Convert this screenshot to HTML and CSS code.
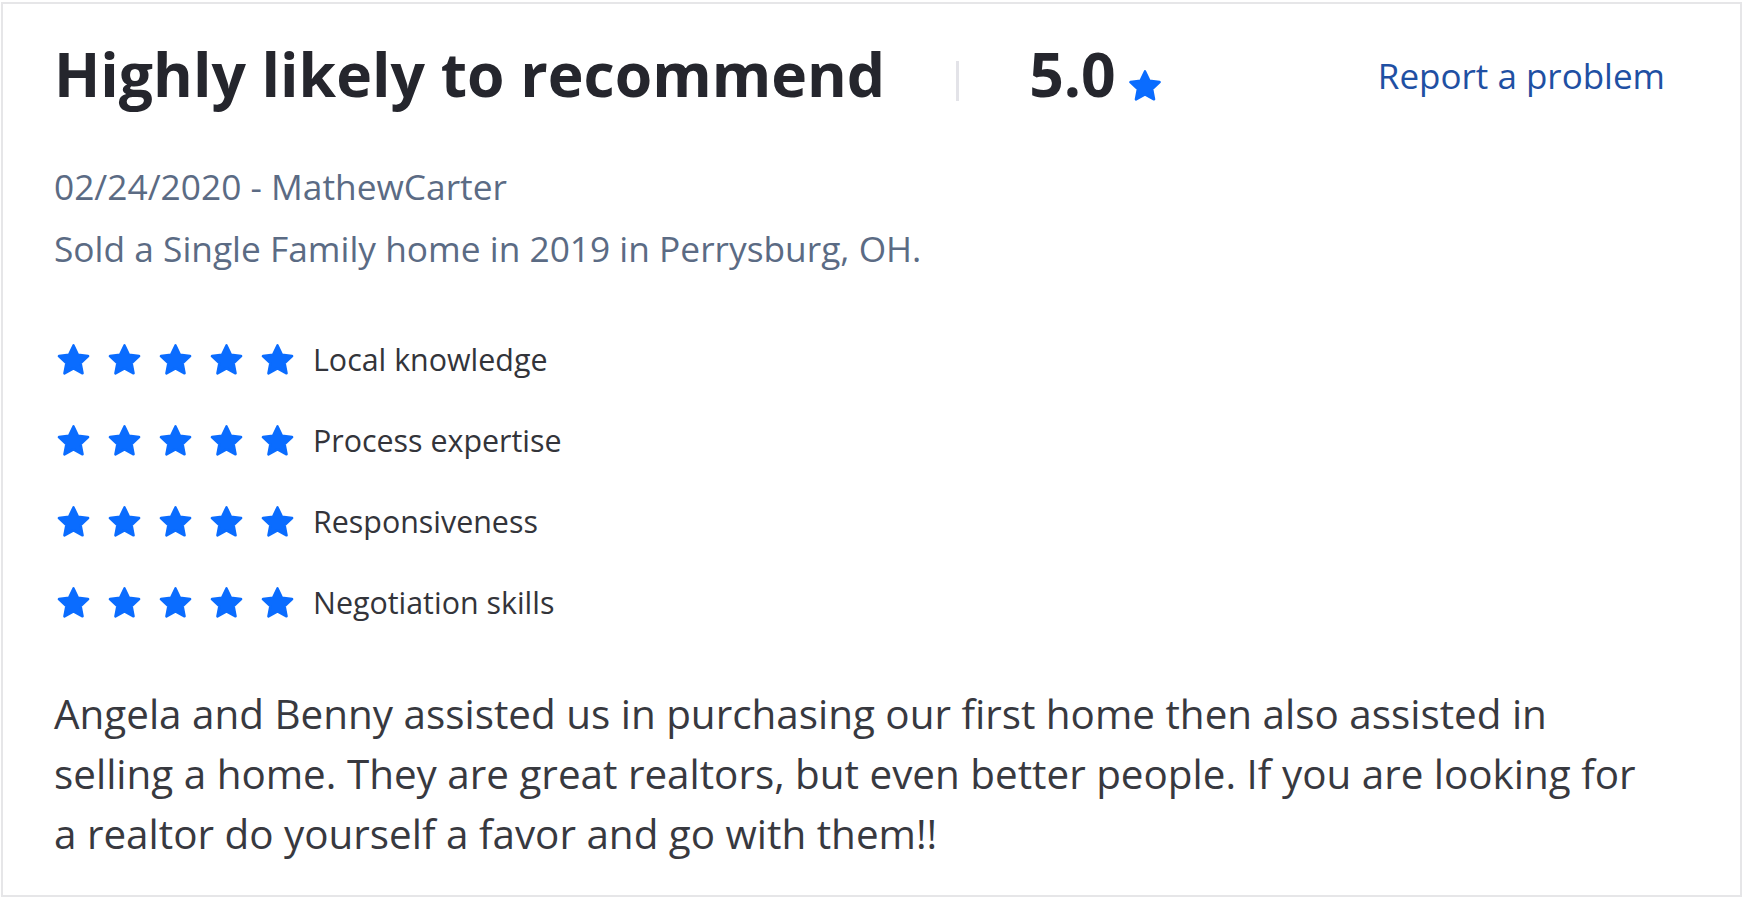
FILE: index.html
```html
<!DOCTYPE html>
<html lang="en">
<head>
    <meta charset="UTF-8">
    <title>Review</title>
    <link rel="stylesheet" href="styles.css">
</head>
<body>
    <svg width="0" height="0" class="defs">
        <symbol id="star" viewBox="0 0 24 24">
            <path d="M12 2.8l2.8 5.9 6.4.8-4.7 4.5 1.2 6.4L12 17.3l-5.7 3.1 1.2-6.4-4.7-4.5 6.4-.8z" fill="currentColor" stroke="currentColor" stroke-width="1.6" stroke-linejoin="round"/>
        </symbol>
    </svg>
    <div class="card">
        <div class="head">
            <h1 class="title">Highly likely to recommend</h1>
            <span class="sep"></span>
            <span class="score">5.0</span>
            <svg class="score-star"><use href="#star"/></svg>
            <a class="report" href="#">Report a problem</a>
        </div>

        <div class="meta">
            <p>02/24/2020 - MathewCarter</p>
            <p>Sold a Single Family home in 2019 in Perrysburg, OH.</p>
        </div>

        <ul class="ratings">
            <li>
                <span class="stars"><svg><use href="#star"/></svg><svg><use href="#star"/></svg><svg><use href="#star"/></svg><svg><use href="#star"/></svg><svg><use href="#star"/></svg></span>
                Local knowledge
            </li>
            <li>
                <span class="stars"><svg><use href="#star"/></svg><svg><use href="#star"/></svg><svg><use href="#star"/></svg><svg><use href="#star"/></svg><svg><use href="#star"/></svg></span>
                Process expertise
            </li>
            <li>
                <span class="stars"><svg><use href="#star"/></svg><svg><use href="#star"/></svg><svg><use href="#star"/></svg><svg><use href="#star"/></svg><svg><use href="#star"/></svg></span>
                Responsiveness
            </li>
            <li>
                <span class="stars"><svg><use href="#star"/></svg><svg><use href="#star"/></svg><svg><use href="#star"/></svg><svg><use href="#star"/></svg><svg><use href="#star"/></svg></span>
                Negotiation skills
            </li>
        </ul>

        <p class="body">Angela and Benny assisted us in purchasing our first home then also assisted in selling a home. They are great realtors, but even better people. If you are looking for a realtor do yourself a favor and go with them!!</p>
    </div>
</body>
</html>
```

FILE: styles.css
```css
body{
    margin: 0;
    background-color: #ffffff;
    font-family: "Open Sans", "Noto Sans", sans-serif;
}
.defs{
    position: absolute;
}
/* the whole review box */
.card{
    box-sizing: border-box;
    height: 895px;
    margin: 2px 3px 0 1px;
    padding: 28px 75px 0 51px;
    border: 2px solid #e6e6e8;
}
/* title row: title | score  ...  report link */
.head{
    display: flex;
    align-items: flex-start;
}
.title{
    margin: 0;
    font-size: 60.6px;
    line-height: normal;
    font-weight: 700;
    color: #25262d;
}
.sep{
    width: 3px;
    height: 40px;
    margin: 29px 70px 0 71px;
    background-color: #e3e3e8;
}
.score{
    font-size: 60.6px;
    line-height: normal;
    font-weight: 700;
    color: #25262d;
}
.score-star{
    width: 38px;
    height: 38px;
    margin: 35px 0 0 10px;
    color: #0a6cff;
}
.report{
    margin: 20px 0 0 auto;
    font-size: 35px;
    line-height: normal;
    color: #1f50a3;
    text-decoration: none;
}
.meta{
    margin-top: 40px;
    color: #5b6b84;
    font-size: 35.3px;
}
.meta p{
    margin: 0;
    line-height: 62px;
}
.ratings{
    list-style: none;
    margin: 40px 0 0;
    padding: 0;
}
.ratings li{
    display: flex;
    align-items: center;
    height: 81px;
    font-size: 30.4px;
    color: #33343a;
}
.stars{
    display: flex;
    gap: 12px;
    margin-right: 16px;
    color: #0a6cff;
}
.stars svg{
    width: 39px;
    height: 38px;
}
.body{
    max-width: 1606px;
    margin: 41px 0 0;
    font-size: 40.4px;
    line-height: 60px;
    color: #38393f;
}
```
